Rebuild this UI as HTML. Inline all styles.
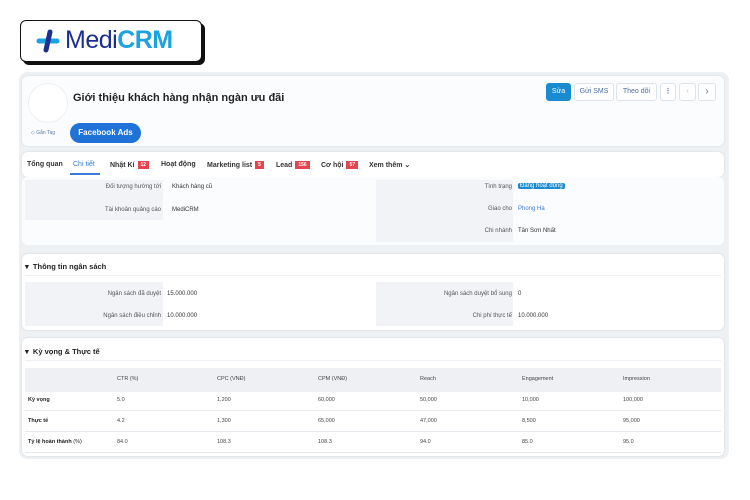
<!DOCTYPE html>
<html><head><meta charset="utf-8"><style>
*{box-sizing:border-box;margin:0;padding:0}
body{width:750px;height:500px;background:#fff;font-family:"Liberation Sans",sans-serif;position:relative;overflow:hidden;color:#222}
.a{position:absolute}
.logo{left:20px;top:20px;width:182px;height:42px;border:1.5px solid #111;border-radius:6px;background:#fff;box-shadow:3px 3px 0 #111}
.wrap{left:19px;top:72px;width:710px;height:387px;background:#eef1f4;border-radius:8px}
.card{background:#fbfcfd;border-radius:6px;box-shadow:0 0 2px rgba(0,0,0,.12)}
.btn{top:83px;height:18px;border:1px solid #dde3ea;border-radius:3px;background:#fff;font-size:7px;color:#4a6fa5;text-align:center;line-height:16px}
.tab{top:161px;font-size:7px;font-weight:bold;color:#333}
.badge{display:inline-block;background:#e2464f;color:#fff;font-size:5px;padding:0 3px;margin-left:3px;line-height:8px;vertical-align:1px}
.lbl{font-size:6px;color:#555;text-align:right}
.val{font-size:6px;color:#333}
.grey{background:#f1f3f6}
.sh{font-size:7.5px;font-weight:bold;color:#222}
.t{font-size:5.5px;color:#444}
.tb{font-size:5.5px;color:#222;font-weight:bold}
</style></head><body>
<div class="a logo">
<svg class="a" style="left:14px;top:8px" width="28" height="24" viewBox="0 0 28 24"><path d="M4 12 H22" stroke="#1aa3e0" stroke-width="5" stroke-linecap="round"/><path d="M15 3 L11 21" stroke="#1b2f8f" stroke-width="5" stroke-linecap="round"/></svg>
<div class="a" style="left:44px;top:5px;font-size:25px;color:#1b2f8f;letter-spacing:-0.5px">Medi<b style="color:#1aa3e0">CRM</b></div>
</div>
<div class="a wrap"></div>
<div class="a card" style="left:22px;top:76px;width:702px;height:70px"></div>
<div class="a" style="left:28px;top:83px;width:40px;height:40px;border-radius:50%;border:1px solid #eceff3;background:#fff"></div>
<div class="a" style="left:73px;top:92px;font-size:11px;font-weight:bold;color:#222">Giới thiệu khách hàng nhận ngàn ưu đãi</div>
<div class="a" style="left:31px;top:130px;font-size:5px;color:#5a7bb0">◇ Gắn Tag</div>
<div class="a" style="left:70px;top:123px;width:71px;height:20px;border-radius:10px;background:#1e72d8;color:#fff;font-size:8px;font-weight:bold;text-align:center;line-height:20px">Facebook Ads</div>
<div class="a btn" style="left:546px;width:25px;background:#1a8bd0;border-color:#1a8bd0;color:#fff">Sửa</div>
<div class="a btn" style="left:574px;width:40px">Gửi SMS</div>
<div class="a btn" style="left:616px;width:41px">Theo dõi</div>
<div class="a btn" style="left:660px;width:16px;font-weight:bold">⋮</div>
<div class="a btn" style="left:679px;width:17px;color:#bbb">‹</div>
<div class="a btn" style="left:698px;width:18px;font-size:10px">›</div>
<div class="a card" style="left:22px;top:152px;width:702px;height:25px;background:#fff"></div>
<div class="a tab" style="left:27px">Tổng quan</div>
<div class="a tab" style="left:73px;color:#3a7bd5;font-weight:normal">Chi tiết</div>
<div class="a" style="left:70px;top:173px;width:30px;height:1.5px;background:#3a7bd5"></div>
<div class="a tab" style="left:110px">Nhật Kí<span class="badge">12</span></div>
<div class="a tab" style="left:161px">Hoạt động</div>
<div class="a tab" style="left:207px">Marketing list<span class="badge">5</span></div>
<div class="a tab" style="left:276px">Lead<span class="badge">156</span></div>
<div class="a tab" style="left:321px">Cơ hội<span class="badge">57</span></div>
<div class="a tab" style="left:369px">Xem thêm ⌄</div>
<div class="a card" style="left:22px;top:177px;width:702px;height:68px;box-shadow:none;background:#fbfcfd"></div>
<div class="a grey" style="left:25px;top:180px;width:138px;height:40px"></div>
<div class="a grey" style="left:376px;top:180px;width:137px;height:62px"></div>
<div class="a lbl" style="left:25px;top:184px;width:136px">Đối tượng hướng tới</div>
<div class="a val" style="left:172px;top:184px">Khách hàng cũ</div>
<div class="a lbl" style="left:25px;top:207px;width:136px">Tài khoản quảng cáo</div>
<div class="a val" style="left:172px;top:207px">MediCRM</div>
<div class="a lbl" style="left:376px;top:184px;width:136px">Tình trạng</div>
<div class="a val" style="left:518px;top:183px;background:#1a8bd0;color:#fff;padding:0 2px;border-radius:2px">Đang hoạt động</div>
<div class="a lbl" style="left:376px;top:206px;width:136px">Giao cho</div>
<div class="a val" style="left:518px;top:206px;color:#3a7bd5">Phong Hà</div>
<div class="a lbl" style="left:376px;top:228px;width:136px">Chi nhánh</div>
<div class="a val" style="left:518px;top:228px">Tân Sơn Nhất</div>

<div class="a card" style="left:22px;top:254px;width:702px;height:76px;background:#fff"></div>
<div class="a sh" style="left:25px;top:262px">▾&nbsp; Thông tin ngân sách</div>
<div class="a" style="left:25px;top:275px;width:696px;height:1px;background:#eceff3"></div>
<div class="a grey" style="left:25px;top:282px;width:138px;height:44px"></div>
<div class="a grey" style="left:376px;top:282px;width:137px;height:44px"></div>
<div class="a lbl" style="left:25px;top:291px;width:136px">Ngân sách đã duyệt</div>
<div class="a val" style="left:167px;top:291px">15.000.000</div>
<div class="a lbl" style="left:25px;top:313px;width:136px">Ngân sách điều chỉnh</div>
<div class="a val" style="left:167px;top:313px">10.000.000</div>
<div class="a lbl" style="left:376px;top:291px;width:136px">Ngân sách duyệt bổ sung</div>
<div class="a val" style="left:518px;top:291px">0</div>
<div class="a lbl" style="left:376px;top:313px;width:136px">Chi phí thực tế</div>
<div class="a val" style="left:518px;top:313px">10.000.000</div>

<div class="a card" style="left:22px;top:338px;width:702px;height:118px;background:#fff"></div>
<div class="a sh" style="left:25px;top:347px">▾&nbsp; Kỳ vọng &amp; Thực tế</div>
<div class="a" style="left:25px;top:360px;width:696px;height:1px;background:#eceff3"></div>
<div class="a grey" style="left:25px;top:368px;width:696px;height:24px;background:#eef0f4"></div>
<div class="a" style="left:25px;top:410px;width:696px;height:1px;background:#e6e9ee"></div>
<div class="a" style="left:25px;top:431px;width:696px;height:1px;background:#e6e9ee"></div>
<div class="a" style="left:25px;top:452px;width:696px;height:1px;background:#e6e9ee"></div>
<div class="a t" style="left:117px;top:376px">CTR (%)</div><div class="a t" style="left:217px;top:376px">CPC (VNĐ)</div><div class="a t" style="left:318px;top:376px">CPM (VNĐ)</div><div class="a t" style="left:420px;top:376px">Reach</div><div class="a t" style="left:522px;top:376px">Engagement</div><div class="a t" style="left:623px;top:376px">Impression</div>
<div class="a tb" style="left:28px;top:397px">Kỳ vọng</div><div class="a t" style="left:117px;top:397px">5.0</div><div class="a t" style="left:217px;top:397px">1,200</div><div class="a t" style="left:318px;top:397px">60,000</div><div class="a t" style="left:420px;top:397px">50,000</div><div class="a t" style="left:522px;top:397px">10,000</div><div class="a t" style="left:623px;top:397px">100,000</div>
<div class="a tb" style="left:28px;top:418px">Thực tế</div><div class="a t" style="left:117px;top:418px">4.2</div><div class="a t" style="left:217px;top:418px">1,300</div><div class="a t" style="left:318px;top:418px">65,000</div><div class="a t" style="left:420px;top:418px">47,000</div><div class="a t" style="left:522px;top:418px">8,500</div><div class="a t" style="left:623px;top:418px">95,000</div>
<div class="a tb" style="left:28px;top:439px">Tỷ lệ hoàn thành <span style="font-weight:normal">(%)</span></div><div class="a t" style="left:117px;top:439px">84.0</div><div class="a t" style="left:217px;top:439px">108.3</div><div class="a t" style="left:318px;top:439px">108.3</div><div class="a t" style="left:420px;top:439px">94.0</div><div class="a t" style="left:522px;top:439px">85.0</div><div class="a t" style="left:623px;top:439px">95.0</div>
</body></html>
